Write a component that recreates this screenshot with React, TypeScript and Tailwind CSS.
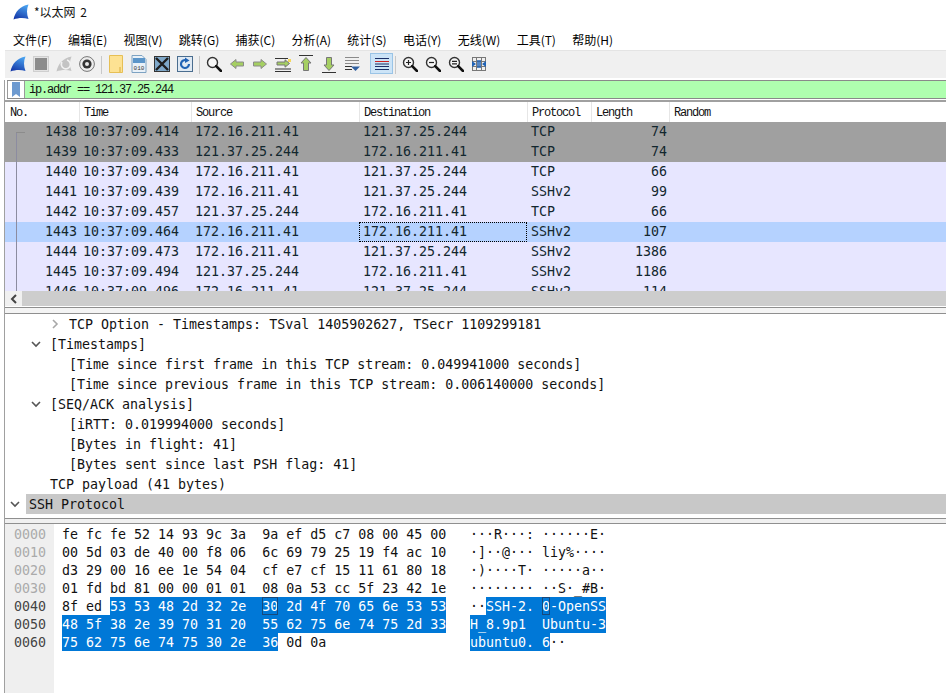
import React from "react";

const mono = "[font-family:'DejaVu_Sans_Mono','Liberation_Mono',monospace] text-[13.3px]";
const head = "[font-family:'Liberation_Mono',monospace] text-[12px] tracking-[-1.2px]";
const finPath = "M0.5 15.5 C2 8 7 2 15.5 0.5 C13.5 5 13.5 10 15.5 15 C10 13.5 5 14 0.5 15.5 Z";

const Fin = ({ size = 16 }: { size?: number }) => (
  <svg width={size} height={size} viewBox="0 0 16 16">
    <defs>
      <linearGradient id="fb" x1="0.7" y1="0" x2="0.3" y2="1">
        <stop offset="0" stopColor="#4aa3f0" />
        <stop offset="1" stopColor="#1538a8" />
      </linearGradient>
    </defs>
    <path d={finPath} fill="url(#fb)" />
  </svg>
);

const Mag = ({ kind }: { kind: "none" | "plus" | "minus" | "eq" }) => (
  <svg width="16" height="16" viewBox="0 0 16 16">
    <circle cx="6.5" cy="6.5" r="5" fill="#f6f6f6" stroke="#333" strokeWidth="1.4" />
    <path d="M10.2 10.2 L15 15" stroke="#111" strokeWidth="2.6" strokeLinecap="round" />
    {kind === "plus" && <path d="M4 6.5h5M6.5 4v5" stroke="#222" strokeWidth="1.2" />}
    {kind === "minus" && <path d="M4 6.5h5" stroke="#222" strokeWidth="1.2" />}
    {kind === "eq" && <path d="M4 5.3h5M4 7.8h5" stroke="#222" strokeWidth="1.2" />}
  </svg>
);

const Arrow = ({ dir }: { dir: "l" | "r" }) => (
  <svg width="16" height="16" viewBox="0 0 16 16">
    <g transform={dir === "r" ? "translate(16 0) scale(-1 1)" : undefined}>
      <path d="M1.5 8 L7 3.5 V6 H14.5 V10 H7 V12.5 Z" fill="#a5cf62" stroke="#8a8a8a" strokeWidth="1" strokeLinejoin="round" />
    </g>
  </svg>
);

const tools: React.ReactNode[] = [
  <Fin />,
  <svg width="16" height="16" viewBox="0 0 16 16"><rect x="0.5" y="0.5" width="15" height="15" fill="#e4e4e4" stroke="#cfcfcf" /><rect x="2" y="2" width="12" height="12" fill="#8c8c8c" /></svg>,
  <svg width="16" height="16" viewBox="0 0 16 16"><path d={finPath} fill="#c4c4c4" /><path d="M11 4 A4.5 4.5 0 1 1 6 6" fill="none" stroke="#f2f2f2" strokeWidth="1.6" /></svg>,
  <svg width="16" height="16" viewBox="0 0 16 16"><circle cx="8" cy="8" r="7.4" fill="#ececec" stroke="#777" /><circle cx="8" cy="8" r="4.6" fill="#333" /><circle cx="8" cy="8" r="2" fill="#e8e8e8" /></svg>,
  "sep",
  <svg width="14" height="18" viewBox="0 0 14 18"><path d="M0.5 0.5H13.5V17.5H0.5Z" fill="#fde293" stroke="#e6bf55" /><path d="M11 12V17" stroke="#d8ac3c" /></svg>,
  <svg width="16" height="18" viewBox="0 0 16 18"><path d="M1 0.5H11L15 4.5V17.5H1Z" fill="#e9f1f8" stroke="#7da2c2" /><rect x="2" y="3" width="12" height="5" fill="#5b95c9" /><text x="8" y="15" fontSize="6" textAnchor="middle" fill="#333" fontFamily="Liberation Mono">010</text></svg>,
  <svg width="16" height="16" viewBox="0 0 16 16"><rect x="0.5" y="0.5" width="15" height="15" fill="#7fa8c9" stroke="#333" /><path d="M2 2 L14 14 M14 2 L2 14" stroke="#1e1e1e" strokeWidth="2.4" /></svg>,
  <svg width="16" height="16" viewBox="0 0 16 16"><rect x="0.5" y="0.5" width="15" height="15" fill="#dfe9f3" stroke="#4a6d8f" /><path d="M12 8 A4 4 0 1 1 9.5 4.3" fill="none" stroke="#1f62b5" strokeWidth="2.2" /><path d="M8 1.5 L12.5 4.5 L8 7 Z" fill="#1f62b5" /></svg>,
  "sep",
  <Mag kind="none" />,
  <Arrow dir="l" />,
  <Arrow dir="r" />,
  <svg width="16" height="16" viewBox="0 0 16 16"><path d="M0 2.5h13M0 13h16M0 15.5h16" stroke="#333" /><path d="M2 6h8V3.8L14.5 7.5 10 11.2V9H2Z" fill="#a5cf62" stroke="#777" /><rect x="13" y="3" width="3" height="3" fill="#f5d75c" /></svg>,
  <svg width="16" height="18" viewBox="0 0 16 18"><path d="M1 0.5h14" stroke="#333" /><path d="M8 2.5 L13 8 H10.5 V15.5 H5.5 V8 H3 Z" fill="#a5cf62" stroke="#777" /></svg>,
  <svg width="16" height="18" viewBox="0 0 16 18"><path d="M1 17.5h14" stroke="#333" /><path d="M8 15.5 L13 10 H10.5 V2.5 H5.5 V10 H3 Z" fill="#a5cf62" stroke="#777" /></svg>,
  <svg width="16" height="16" viewBox="0 0 16 16"><path d="M1 1.5h14M1 4.5h14M1 7.5h14" stroke="#8a8a8a" /><path d="M1 10.5h7M1 13.5h7" stroke="#333" /><path d="M7 10.5h9L11.5 15Z" fill="#2f5f9f" /></svg>,
  "active",
  "sep2",
  <Mag kind="plus" />,
  <Mag kind="minus" />,
  <Mag kind="eq" />,
  <svg width="14" height="14" viewBox="0 0 14 14"><path d="M0 .5h14M0 13.5h14M.5 0v14M4.5 0v14M9.5 0v14M13.5 0v14M0 4.5h14M0 9.5h14" stroke="#777" /><path d="M0 4l4 3-4 3ZM14 4l-4 3 4 3Z" fill="#1f62b5" /><path d="M5 3h4v8H5Z" fill="#1f62b5" opacity="0.75" /></svg>,
];

const menus = ["文件(F)", "编辑(E)", "视图(V)", "跳转(G)", "捕获(C)", "分析(A)", "统计(S)", "电话(Y)", "无线(W)", "工具(T)", "帮助(H)"];
const columns = ["No.", "Time", "Source", "Destination", "Protocol", "Length", "Random"];
const grid = "grid grid-cols-[74px_112px_168px_168px_64px_78px_1fr]";

const packets = [
  ["1438", "10:37:09.414", "172.16.211.41", "121.37.25.244", "TCP", "74", "g"],
  ["1439", "10:37:09.433", "121.37.25.244", "172.16.211.41", "TCP", "74", "g"],
  ["1440", "10:37:09.434", "172.16.211.41", "121.37.25.244", "TCP", "66", "l"],
  ["1441", "10:37:09.439", "172.16.211.41", "121.37.25.244", "SSHv2", "99", "l"],
  ["1442", "10:37:09.457", "121.37.25.244", "172.16.211.41", "TCP", "66", "l"],
  ["1443", "10:37:09.464", "172.16.211.41", "172.16.211.41", "SSHv2", "107", "s"],
  ["1444", "10:37:09.473", "172.16.211.41", "121.37.25.244", "SSHv2", "1386", "l"],
  ["1445", "10:37:09.494", "121.37.25.244", "172.16.211.41", "SSHv2", "1186", "l"],
  ["1446", "10:37:09.496", "172.16.211.41", "121.37.25.244", "SSHv2", "114", "l"],
];

const rowBg: Record<string, string> = { g: "bg-[#a0a0a0]", l: "bg-[#e7e6ff]", s: "bg-[#b5d2ff]" };

const Chev = ({ open, light }: { open: boolean; light?: boolean }) => (
  <svg width="10" height="10" viewBox="0 0 10 10">
    <path d={open ? "M1 3 L5 7 L9 3" : "M3 1 L7 5 L3 9"} fill="none" stroke={light ? "#a8a8a8" : "#555"} strokeWidth="1.6" />
  </svg>
);

const details: [number, string, "open" | "closed" | null][] = [
  [69, "TCP Option - Timestamps: TSval 1405902627, TSecr 1109299181", "closed"],
  [50, "[Timestamps]", "open"],
  [69, "[Time since first frame in this TCP stream: 0.049941000 seconds]", null],
  [69, "[Time since previous frame in this TCP stream: 0.006140000 seconds]", null],
  [50, "[SEQ/ACK analysis]", "open"],
  [69, "[iRTT: 0.019994000 seconds]", null],
  [69, "[Bytes in flight: 41]", null],
  [69, "[Bytes sent since last PSH flag: 41]", null],
  [50, "TCP payload (41 bytes)", null],
];

type Hex = { off: string; dim: boolean; h: [string, string, string]; a: [string, string, string] };
const hex: Hex[] = [
  { off: "0000", dim: true, h: ["fe fc fe 52 14 93 9c 3a  9a ef d5 c7 08 00 45 00", "", ""], a: ["···R···: ······E·", "", ""] },
  { off: "0010", dim: true, h: ["00 5d 03 de 40 00 f8 06  6c 69 79 25 19 f4 ac 10", "", ""], a: ["·]··@··· liy%····", "", ""] },
  { off: "0020", dim: true, h: ["d3 29 00 16 ee 1e 54 04  cf e7 cf 15 11 61 80 18", "", ""], a: ["·)····T· ·····a··", "", ""] },
  { off: "0030", dim: true, h: ["01 fd bd 81 00 00 01 01  08 0a 53 cc 5f 23 42 1e", "", ""], a: ["········ ··S·_#B·", "", ""] },
  { off: "0040", dim: false, h: ["8f ed ", "53 53 48 2d 32 2e  |30| 2d 4f 70 65 6e 53 53", ""], a: ["··", "SSH-2. |0|-OpenSS", ""] },
  { off: "0050", dim: false, h: ["", "48 5f 38 2e 39 70 31 20  55 62 75 6e 74 75 2d 33", ""], a: ["", "H_8.9p1  Ubuntu-3", ""] },
  { off: "0060", dim: false, h: ["", "75 62 75 6e 74 75 30 2e  36", " 0d 0a"], a: ["", "ubuntu0. 6", "··"] },
];

const Sel = ({ text }: { text: string }) => {
  const parts = text.split("|");
  return (
    <span className="inline-block h-[18px] bg-[#0078d7] text-white">
      {parts.map((p, i) =>
        i === 1 ? (
          <span key={i} className="inline-block h-[18px] outline-1 outline-offset-[-1px] outline-[#17497c]">
            {p}
          </span>
        ) : (
          <span key={i}>{p}</span>
        )
      )}
    </span>
  );
};

export default function App() {
  return (
    <div className="w-[946px] h-[693px] overflow-hidden bg-white text-[#111] flex flex-col [font-family:'Noto_Sans_CJK_SC','Noto_Sans',sans-serif]">
      <div className="h-[30px] shrink-0 flex items-center pl-[13px] pb-[6px] gap-[5px] text-[12px] [word-spacing:2px]">
        <Fin size={16} />
        <span>*以太网 2</span>
      </div>
      <div className="h-[20px] shrink-0 flex items-center pl-[13px] gap-[16.3px] text-[12px] text-black">
        {menus.map((m) => (
          <span key={m}>{m}</span>
        ))}
      </div>
      <div className="h-[28px] shrink-0 ml-[5px] flex items-center pl-[5px] gap-[7px] bg-[#f0f0f0] border-t border-[#e4e4e4]">
        {tools.map((t, i) =>
          t === "sep" ? (
            <span key={i} className="w-px h-[18px] bg-[#c8c8c8] mx-[-1px]" />
          ) : t === "sep2" ? (
            <span key={i} className="w-px h-[18px] bg-[#c8c8c8] ml-[-5px] mr-[-1px]" />
          ) : t === "active" ? (
            <span key={i} className="w-[23px] h-[21px] ml-[3px] mb-[2px] flex items-center justify-center bg-[#cce4f7] border border-[#9ac4e6]">
              <svg width="16" height="14" viewBox="0 0 16 14">
                <path d="M1 1.5h14M1 9.5h14M1 12.5h14" stroke="#1b2f66" />
                <path d="M1 4.5h14" stroke="#d02020" />
                <path d="M1 7h14" stroke="#1b2f66" />
              </svg>
            </span>
          ) : (
            <span key={i} className="w-[16px] h-[18px] mb-[1px] flex items-center justify-center">
              {t}
            </span>
          )
        )}
      </div>
      <div className="h-[2px] shrink-0" />
      <div className="ml-[4px] flex-1 flex flex-col border-l border-[#a0a0a0] min-h-0">
        <div className="h-[19px] shrink-0 flex items-stretch bg-[#afffaf] border-y border-[#8a8a8a] ml-[2px]">
          <span className="w-[18px] flex justify-center bg-white border-x border-[#9a9a9a]">
            <svg width="8" height="15" viewBox="0 0 8 15" className="mt-[1px]">
              <path d="M0 0H8V15L4 12L0 15Z" fill="#6d9ad0" />
            </svg>
          </span>
          <span className={`${head} pl-[4px] leading-[19px] text-[#111]`}>ip.addr == 121.37.25.244</span>
        </div>
        <div className={`${grid} h-[22px] shrink-0 border-t-2 border-[#a0a0a0] mt-[1px] ${head} leading-[22px] text-[#111]`}>
          {columns.map((c, i) => (
            <span key={c} className={i === 0 ? "pl-[5px]" : "pl-[4px] border-l border-[#e6e6e6]"}>
              {c}
            </span>
          ))}
        </div>
        <div className={`h-[169px] shrink-0 overflow-hidden ${mono} text-[#12272e]`}>
          {packets.map((p, i) => (
            <div key={p[0]} className={`${grid} h-[20px] leading-[20px] ${rowBg[p[6]]}`}>
              <span className="relative text-right pr-[2px]">
                <span className={`absolute left-[11px] w-px bg-[#8c8ca0] ${i === 0 ? "top-[10px] bottom-0" : "top-0 bottom-0"}`} />
                {i === 0 && <span className="absolute left-[11px] top-[10px] w-[9px] h-px bg-[#8c8c8c]" />}
                {p[0]}
              </span>
              <span className="pl-[4px]">{p[1]}</span>
              <span className="pl-[4px]">{p[2]}</span>
              <span className={`pl-[4px] ${i === 5 ? "outline-1 outline-dotted outline-offset-[-1px] outline-black" : ""}`}>{p[3]}</span>
              <span className="pl-[4px]">{p[4]}</span>
              <span className="text-right pr-[2px]">{p[5]}</span>
              <span />
            </div>
          ))}
        </div>
        <div className="h-[15px] flex bg-[#cdcdcd] shrink-0">
          <span className="w-[17px] bg-[#f0f0f0] flex items-center justify-center">
            <svg width="8" height="10" viewBox="0 0 8 10">
              <path d="M6 1 L2 5 L6 9" fill="none" stroke="#444" strokeWidth="2" />
            </svg>
          </span>
        </div>
        <div className="h-[7px] mt-[1px] shrink-0 bg-[#f4f4f4] border-y border-[#8f8f8f]" />
        <div className={`${mono} h-[200px] shrink-0 text-[#111]`}>
          {details.map(([x, t, state]) => (
            <div key={t} className="h-[20px] leading-[22px] relative whitespace-pre" style={{ paddingLeft: x - 5 }}>
              {state && (
                <span className="absolute top-[5px]" style={{ left: x - 24 }}>
                  <Chev open={state === "open"} light={state === "closed"} />
                </span>
              )}
              {t}
            </div>
          ))}
          <div className="h-[20px] flex items-center">
            <span className="w-[21px] pl-[5px] flex">
              <Chev open />
            </span>
            <span className="flex-1 h-[20px] leading-[22px] bg-[#c8c8c8] pl-[3px]">SSH Protocol</span>
          </div>
        </div>
        <div className="h-[6px] shrink-0 mt-[4px] bg-[#f0f0f0] border-y border-[#8f8f8f]" />
        <div className={`flex-1 flex min-h-0 ${mono}`}>
          <div className="w-[49px] bg-[#efefef] pt-[1px] pl-[9px]">
            {hex.map((r) => (
              <div key={r.off} className={`h-[18px] leading-[20px] ${r.dim ? "text-[#aaaaaa]" : "text-[#444]"}`}>
                {r.off}
              </div>
            ))}
          </div>
          <div className="pt-[1px] pl-[8px] whitespace-pre">
            {hex.map((r, i) => (
              <div key={r.off} className="h-[18px] leading-[20px] flex relative" style={{ zIndex: 10 - i }}>
                <span className="w-[408px]">
                  {r.h[0]}
                  {r.h[1] && <Sel text={r.h[1]} />}
                  {r.h[2]}
                </span>
                <span>
                  {r.a[0]}
                  {r.a[1] && <Sel text={r.a[1]} />}
                  {r.a[2]}
                </span>
              </div>
            ))}
          </div>
        </div>
      </div>
    </div>
  );
}
